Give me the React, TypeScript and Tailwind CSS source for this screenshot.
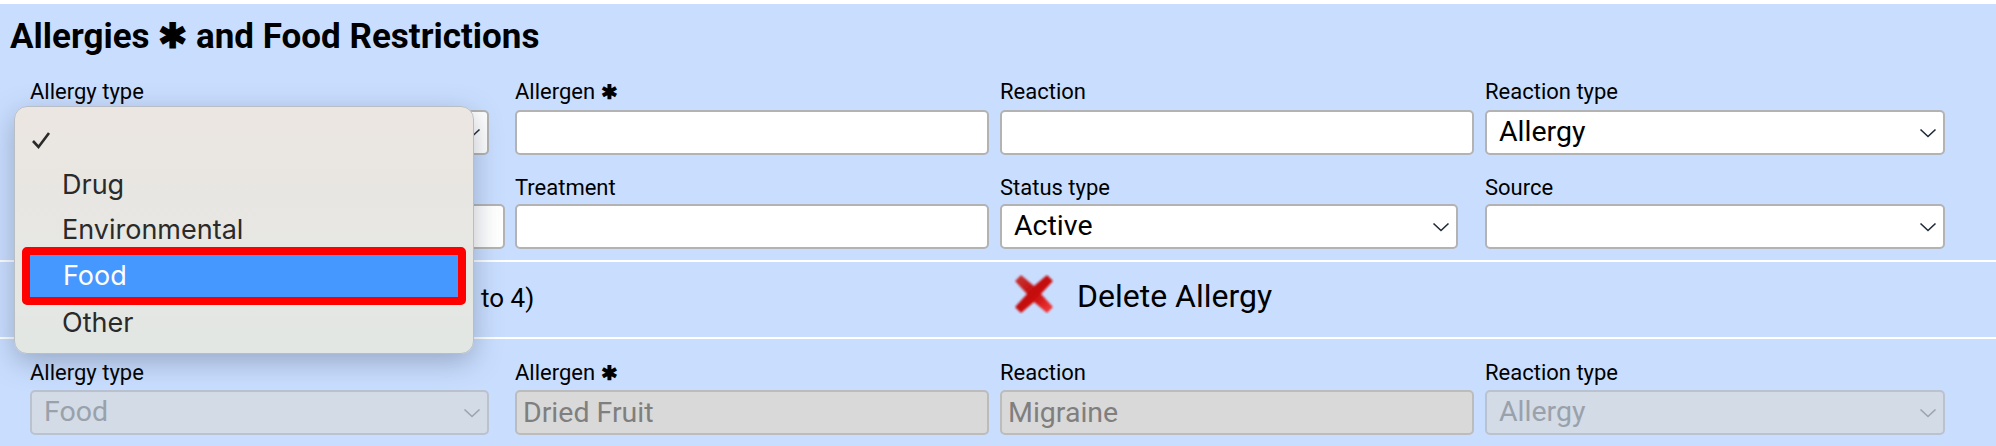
const font = { fontFamily: "Roboto, sans-serif" };

function Chevron({ disabled }: { disabled?: boolean }) {
  return (
    <svg width="18" height="12" viewBox="0 0 18 12" fill="none" className="shrink-0">
      <path
        d="M1.5 2.5 L9 9.5 L16.5 2.5"
        stroke={disabled ? "#9ca3af" : "#1f2937"}
        strokeWidth="1.6"
      />
    </svg>
  );
}

function Field({
  label,
  star,
  labelClass = "mb-[6px]",
  children,
}: {
  label?: string;
  star?: boolean;
  labelClass?: string;
  children: React.ReactNode;
}) {
  return (
    <div>
      <div className={`flex h-[24px] items-center gap-[6px] text-[22px] leading-[24px] text-black ${labelClass}`}>
        {label}
        {star && <span className="text-[20px] font-bold">✱</span>}
      </div>
      {children}
    </div>
  );
}

function TextBox({ value, width, disabled }: { value?: string; width: string; disabled?: boolean }) {
  return (
    <input
      readOnly
      value={value ?? ""}
      className={`${width} h-[45px] block rounded-[5px] border-2 px-[6px] text-[28.5px] outline-none ${
        disabled ? "bg-[#d9d9d9] border-[#bcbcbc] text-[#7f7f7f]" : "bg-white border-[#b3b3b3]"
      }`}
    />
  );
}

function SelectBox({ value, width, disabled }: { value?: string; width: string; disabled?: boolean }) {
  return (
    <div
      className={`${width} h-[45px] flex items-center justify-between rounded-[5px] border-2 pl-[12px] pr-[6px] text-[28.5px] ${
        disabled ? "bg-[#d3dbe6] border-[#b9c2ce] text-[#99a1ab]" : "bg-white border-[#b3b3b3] text-black"
      }`}
    >
      <span>{value}</span>
      <Chevron disabled={disabled} />
    </div>
  );
}

function DeleteIcon() {
  return (
    <svg width="40" height="40" viewBox="0 0 40 40" className="mb-[6px] shrink-0">
      <defs>
        <linearGradient id="red" x1="0" y1="0" x2="1" y2="1">
          <stop offset="0" stopColor="#c73a3a" />
          <stop offset="0.5" stopColor="#c40808" />
          <stop offset="1" stopColor="#f84040" />
        </linearGradient>
        <filter id="soft">
          <feGaussianBlur stdDeviation="1" />
        </filter>
      </defs>
      <path
        d="M7 1 L20 12 L33 1 L39 7 L27 20 L39 33 L33 39 L20 28 L7 39 L1 33 L13 20 L1 7 Z"
        fill="url(#red)"
        filter="url(#soft)"
      />
    </svg>
  );
}

function Menu() {
  return (
    <div className="absolute left-[14px] top-[102px] w-[460px] h-[248px] rounded-[13px] border border-[#b9bec5] bg-gradient-to-b from-[#ece6e2] to-[#e2e7e3] shadow-[0_8px_28px_rgba(60,70,90,0.35)] pt-[10px] text-[27px] leading-[46px] text-[#2a2a2a] font-['Inter',sans-serif]">
      <div className="h-[46px] pl-[16px] flex items-center">
        <svg width="20" height="20" viewBox="0 0 20 20" fill="none">
          <path d="M2 11 L7.5 17 L18 3" stroke="#2a2a2a" strokeWidth="2.6" />
        </svg>
      </div>
      <div className="pl-[47px] mt-[-1px]">Drug</div>
      <div className="pl-[47px] mt-[-1px]">Environmental</div>
      <div className="mx-[7px] mt-[-6px] mb-[-5px] h-[58px] rounded-[5px] border-[8px] border-[#fe0000] bg-[#4598ff] pl-[33px] leading-[42px] text-white">
        Food
      </div>
      <div className="pl-[47px]">Other</div>
    </div>
  );
}

export default function App() {
  return (
    <div className="pt-[4px] bg-white" style={font}>
      <div className="relative h-[442px] bg-[#c9deff] overflow-hidden">
        <h2 className="pl-[10px] pt-[13px] text-[35px] leading-[40px] font-bold text-black">
          Allergies ✱ and Food Restrictions
        </h2>
        <div className="pl-[30px] pt-[23px] grid grid-cols-[485px_485px_485px_1fr]">
          <Field label="Allergy type"><SelectBox width="w-[459px]" /></Field>
          <Field label="Allergen" star><TextBox width="w-[474px]" /></Field>
          <Field label="Reaction"><TextBox width="w-[474px]" /></Field>
          <Field label="Reaction type"><SelectBox width="w-[460px]" value="Allergy" /></Field>
        </div>
        <div className="pl-[30px] pt-[21px] grid grid-cols-[485px_485px_485px_1fr]">
          <Field labelClass="mb-[4px]"><TextBox width="w-[475px]" /></Field>
          <Field label="Treatment" labelClass="mb-[4px]"><TextBox width="w-[474px]" /></Field>
          <Field label="Status type" labelClass="mb-[4px]"><SelectBox width="w-[458px]" value="Active" /></Field>
          <Field label="Source" labelClass="mb-[4px]"><SelectBox width="w-[460px]" /></Field>
        </div>
        <div className="mt-[11px] h-[79px] border-y-2 border-white pb-[6px] flex items-center">
          <div className="w-[1014px] shrink-0 pl-[481px] pt-[3px] text-[26px] text-black whitespace-nowrap">
            to 4)
          </div>
          <DeleteIcon />
          <span className="ml-[23px] mb-[2px] text-[32px] text-black">Delete Allergy</span>
        </div>
        <div className="pl-[30px] pt-[22px] grid grid-cols-[485px_485px_485px_1fr]">
          <Field label="Allergy type" labelClass="mb-[5px]"><SelectBox disabled width="w-[459px]" value="Food" /></Field>
          <Field label="Allergen" star labelClass="mb-[5px]"><TextBox disabled width="w-[474px]" value="Dried Fruit" /></Field>
          <Field label="Reaction" labelClass="mb-[5px]"><TextBox disabled width="w-[474px]" value="Migraine" /></Field>
          <Field label="Reaction type" labelClass="mb-[5px]"><SelectBox disabled width="w-[460px]" value="Allergy" /></Field>
        </div>
        <Menu />
      </div>
    </div>
  );
}
